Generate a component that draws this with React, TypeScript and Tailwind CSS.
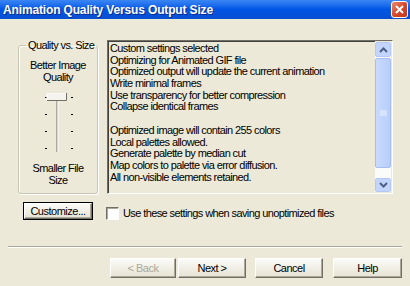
import React from "react";

const lines = [
  "Custom settings selected",
  "Optimizing for Animated GIF file",
  "Optimized output will update the current animation",
  "Write minimal frames",
  "Use transparency for better compression",
  "Collapse identical frames",
  "",
  "Optimized image will contain 255 colors",
  "Local palettes allowed.",
  "Generate palette by median cut",
  "Map colors to palette via error diffusion.",
  "All non-visible elements retained.",
];

const font = { fontFamily: '"Liberation Sans", Arial, sans-serif' };

const XpButton = ({
  label,
  className = "w-[68px] h-[20px]",
  disabled = false,
}: {
  label: string;
  className?: string;
  disabled?: boolean;
}) => (
  <button
    className={`text-[11px] leading-none tracking-[-0.5px] border border-t-white border-l-white border-r-[#716f64] border-b-[#716f64] bg-gradient-to-b from-[#fbfbf8] to-[#e6e3d3] shadow-[inset_-1px_-1px_0_#aca899] ${
      disabled ? "text-[#aca899]" : "text-black"
    } ${className}`}
  >
    {label}
  </button>
);

const Arrow = ({ up }: { up: boolean }) => (
  <svg width="9" height="6" viewBox="0 0 9 6">
    <path
      d={up ? "M1 5 L4.5 1.5 L8 5" : "M1 1 L4.5 4.5 L8 1"}
      fill="none"
      stroke="#4d6185"
      strokeWidth="2"
    />
  </svg>
);

export default function App() {
  return (
    <div className="w-[410px] h-[286px] bg-[#ece9d8] flex flex-col overflow-hidden tracking-[-0.6px]" style={font}>
      {/* title bar */}
      <div className="h-[19px] flex items-center justify-between bg-gradient-to-b from-[#3a86f4] via-[#0055e5] to-[#0a4fd0] pl-[3px] pr-[2px]">
        <span
          className="text-white font-bold text-[12px] leading-none tracking-[-0.15px]"
          style={{ textShadow: "1px 1px 0 #0a2a8a" }}
        >
          Animation Quality Versus Output Size
        </span>
        <div className="w-[17px] h-[17px] rounded-[3px] border border-white bg-gradient-to-br from-[#e98a6d] via-[#d6492a] to-[#c43a1c] flex items-center justify-center">
          <svg width="9" height="9" viewBox="0 0 9 9">
            <path d="M1 1 L8 8 M8 1 L1 8" stroke="white" strokeWidth="2" />
          </svg>
        </div>
      </div>

      {/* main row */}
      <div className="flex mt-[20px] ml-[18px]">
        <fieldset className="w-[80px] h-[155px] border border-[#c8c5b5] rounded-[3px] shadow-[inset_1px_1px_0_#fff,1px_1px_0_#fff] flex flex-col items-center p-0 m-0">
          <legend className="ml-[7px] px-[2px] text-[11px] leading-[12px] text-black whitespace-nowrap">
            Quality vs. Size
          </legend>
          <div className="mt-[8px] text-[11px] leading-[12px] text-center text-black whitespace-nowrap">
            Better Image
            <br />
            Quality
          </div>
          <svg width="32" height="62" viewBox="0 0 32 62" className="mt-[10px] ml-[4px]">
            <rect x="12.5" y="7" width="1" height="52" fill="#716f64" />
            <rect x="13.5" y="7" width="1" height="52" fill="#fff" />
            {[4, 21, 38, 55].map((y) => (
              <g key={y}>
                <rect x="1" y={y} width="2" height="1" fill="#000" />
                <rect x="27" y={y} width="2" height="1" fill="#000" />
              </g>
            ))}
            <rect x="3" y="0" width="20" height="8" fill="#f4f3ee" />
            <path d="M3 8 V0 H23" fill="none" stroke="#fff" strokeWidth="1" />
            <path d="M3 7.5 H22.5 V0" fill="none" stroke="#716f64" strokeWidth="1" />
          </svg>
          <div className="mt-[7px] text-[11px] leading-[12px] text-center text-black whitespace-nowrap">
            Smaller File
            <br />
            Size
          </div>
        </fieldset>

        <div className="ml-[9px] mt-[1px] w-[286px] h-[154px] border border-t-[#716f64] border-l-[#716f64] border-r-white border-b-white flex">
          <div className="flex-1 border-t border-l border-[#404040] pl-[1px] pt-[1px] text-[11px] leading-[11.7px] text-black whitespace-pre">
            {lines.map((l, i) => (
              <div key={i} className="h-[11.7px]">
                {l}
              </div>
            ))}
          </div>
          <div className="w-[16px] my-[1px] mr-[1px] flex flex-col bg-[#fbfbf9]">
            <div className="h-[15px] rounded-[2px] border border-[#b5c8f3] bg-[#c3d5fd] flex items-center justify-center">
              <Arrow up />
            </div>
            <div className="h-[110px] mt-[1px] rounded-[2px] border border-[#a7bcf0] bg-gradient-to-r from-[#c9dafd] to-[#b8cefb] flex items-center justify-center">
              <svg width="7" height="7" viewBox="0 0 7 7">
                <path d="M0 1 H7 M0 3 H7 M0 5 H7" stroke="#eef3fe" />
              </svg>
            </div>
            <div className="flex-1" />
            <div className="h-[14px] rounded-[2px] border border-[#b5c8f3] bg-[#c3d5fd] flex items-center justify-center">
              <Arrow up={false} />
            </div>
          </div>
        </div>
      </div>

      {/* second row */}
      <div className="flex items-center mt-[7px] h-[20px]">
        <div className="ml-[23px] border border-black flex">
          <XpButton label="Customize..." className="w-[68px] h-[16px]" />
        </div>
        <div className="ml-[13px] mt-[5px] w-[13px] h-[13px] border border-t-[#716f64] border-l-[#716f64] border-r-white border-b-white bg-white shadow-[inset_1px_1px_0_#aca899]" />
        <span className="ml-[4px] mt-[5px] text-[11px] leading-none text-black">
          Use these settings when saving unoptimized files
        </span>
      </div>

      {/* separator */}
      <div className="mx-[8px] mt-[25px] h-[2px] border-t border-[#aca899] border-b border-b-white" />

      {/* buttons */}
      <div className="flex mt-[10px] ml-[110px]">
        <XpButton label="< Back" disabled className="w-[66px] h-[20px]" />
        <XpButton label="Next >" className="ml-[2px] w-[68px] h-[20px]" />
        <XpButton label="Cancel" className="ml-[9px] w-[68px] h-[20px]" />
        <XpButton label="Help" className="ml-[10px] w-[69px] h-[20px]" />
      </div>
    </div>
  );
}
